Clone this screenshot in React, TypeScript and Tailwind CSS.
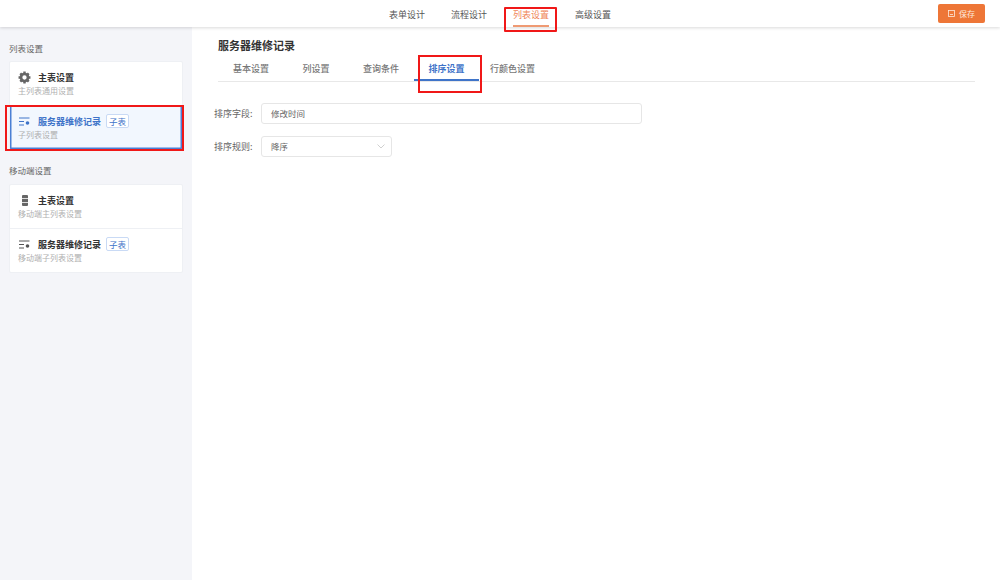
const font = { fontFamily: '"Noto Sans CJK SC", sans-serif' };

function GearIcon() {
    return (
        <svg width="13" height="13" viewBox="0 0 24 24" fill="none" stroke="#666" strokeWidth="5" strokeLinejoin="round">
            <circle cx="12" cy="12" r="6.5" />
            <path strokeWidth="4.5" d="M12 1v4M12 19v4M1 12h4M19 12h4M4.200 4.200l2.800 2.800M17 17l2.800 2.800M4.200 19.800L7 17M17 7l2.800-2.800" />
        </svg>
    );
}

function SubIcon({ color }: { color: string }) {
    return (
        <svg width="11" height="9" viewBox="0 0 11 9" fill="none" stroke={color} strokeWidth="1">
            <path d="M0 1h10.500M0 4.500h5M0 8h5" />
            <circle cx="8.500" cy="6" r="1.800" fill={color} stroke="none" />
        </svg>
    );
}

function PhoneIcon() {
    return (
        <svg width="6" height="11" viewBox="0 0 6 11">
            <rect width="6" height="11" rx="1" fill="#666" />
            <rect x="0" y="3" width="6" height="1" fill="#ddd" />
            <rect x="0" y="7" width="6" height="1" fill="#ddd" />
        </svg>
    );
}

function Badge() {
    return (
        <span className="flex h-[14px] w-[23px] items-center justify-center rounded-[2px] border border-[#c9daf5] bg-white text-[8.500px] leading-none text-[#3f74c9]">
            子表
        </span>
    );
}

type RowProps = {
    active?: boolean;
    badge?: boolean;
    icon: React.ReactNode;
    subtitle: string;
    title: string;
};

function Row({ active, badge, icon, subtitle, title }: RowProps) {
    return (
        <div
            className={`flex h-[43.500px] flex-col pt-[9px] pl-[8px] ${
                active
                    ? 'bg-[#f2f7fe] shadow-[inset_1.500px_0_0_#4a7fd4,inset_-1.500px_0_0_#4a7fd4,inset_0_-1.500px_0_0_#4a7fd4]'
                    : ''
            }`}
        >
            <div className="flex h-[13px] items-center">
                <span className="flex w-[13px] justify-center">{icon}</span>
                <span className={`ml-[7px] text-[9px] leading-none font-bold ${active ? 'text-[#3f74c9]' : 'text-[#333]'}`}>
                    {title}
                </span>
                {badge && (
                    <span className="ml-[5px]">
                        <Badge />
                    </span>
                )}
            </div>
            <span className="mt-[1px] text-[8px] leading-[11px] text-[#b0b0b0]">{subtitle}</span>
        </div>
    );
}

function NavItem({ active, label }: { active?: boolean; label: string }) {
    return (
        <div className={`flex h-[27px] items-center pt-[2px] text-[9px] ${active ? 'relative text-[#ef8558]' : 'text-[#555]'}`}>
            {label}
            {active && <span className="absolute right-0 bottom-0 left-0 h-[2px] bg-[#ef9a73]" />}
        </div>
    );
}

function Tab({ active, label, width }: { active?: boolean; label: string; width: string }) {
    return (
        <div
            className={`${width} flex h-[26px] items-center justify-center border-b-2 pt-[3px] text-[9px] ${
                active ? 'border-[#3f74c9] font-bold text-[#3f74c9]' : 'border-transparent font-medium text-[#777]'
            }`}
        >
            {label}
        </div>
    );
}

export default function App() {
    return (
        <div className="relative flex h-[580px] w-[1000px] flex-col overflow-hidden bg-white" style={font}>
            <header className="relative z-10 flex h-[27px] shrink-0 items-center justify-center bg-white shadow-[0_1px_3px_rgba(0,0,0,0.15)]">
                <div className="flex gap-[26px]">
                    <NavItem label="表单设计" />
                    <NavItem label="流程设计" />
                    <NavItem active label="列表设置" />
                    <NavItem label="高级设置" />
                </div>
                <button className="absolute top-[4px] left-[938px] flex h-[19px] w-[47px] items-center justify-center gap-[4px] rounded-[2px] bg-[#ee7637] text-[8px] text-[#fde9dd]">
                    <svg width="7" height="7" viewBox="0 0 7 7" fill="none" stroke="#fde9dd" strokeWidth="0.800">
                        <rect x="0.500" y="0.500" width="6" height="6" />
                        <path d="M2 4.500h3" />
                    </svg>
                    保存
                </button>
            </header>

            <div className="flex flex-1">
                <aside className="w-[192px] shrink-0 bg-[#f4f5f9] pt-[15px] pl-[9px]">
                    <p className="text-[8.500px] leading-[12px] text-[#666]">列表设置</p>
                    <div className="mt-[7px] w-[174px] overflow-hidden rounded-[2px] border border-[#eef0f4] bg-white">
                        <Row icon={<GearIcon />} title="主表设置" subtitle="主列表通用设置" />
                        <Row active badge icon={<SubIcon color="#3f74c9" />} title="服务器维修记录" subtitle="子列表设置" />
                    </div>

                    <p className="mt-[14px] text-[8.500px] leading-[12px] text-[#666]">移动端设置</p>
                    <div className="mt-[8px] w-[174px] divide-y divide-[#eef0f4] overflow-hidden rounded-[2px] border border-[#eef0f4] bg-white">
                        <Row icon={<PhoneIcon />} title="主表设置" subtitle="移动端主列表设置" />
                        <Row badge icon={<SubIcon color="#555" />} title="服务器维修记录" subtitle="移动端子列表设置" />
                    </div>
                </aside>

                <main className="flex-1 pt-[10px] pr-[25px] pl-[22px]">
                    <h1 className="pl-[4px] text-[11px] leading-[16px] font-bold text-[#333]">服务器维修记录</h1>
                    <div className="mt-[1px] ml-[4px] flex h-[28px] items-end border-b border-[#e8e8e8]">
                        <Tab width="w-[66px]" label="基本设置" />
                        <Tab width="w-[64px]" label="列设置" />
                        <Tab width="w-[66px]" label="查询条件" />
                        <Tab active width="w-[65px]" label="排序设置" />
                        <Tab width="w-[67px]" label="行颜色设置" />
                    </div>

                    <div className="mt-[21px] flex items-center">
                        <label className="w-[47px] text-[9px] text-[#666]">排序字段:</label>
                        <div className="flex h-[21px] w-[381px] items-center rounded-[3px] border border-[#e6e6e6] px-[9px] text-[8.500px] text-[#666]">
                            修改时间
                        </div>
                    </div>
                    <div className="mt-[12px] flex items-center">
                        <label className="w-[47px] text-[9px] text-[#666]">排序规则:</label>
                        <div className="flex h-[21px] w-[131px] items-center justify-between rounded-[3px] border border-[#e6e6e6] pr-[6px] pl-[9px] text-[8.500px] text-[#666]">
                            降序
                            <svg width="8" height="5" viewBox="0 0 8 5" fill="none" stroke="#c4c4c4" strokeWidth="0.800">
                                <path d="M0.500 0.500L4 4l3.500-3.500" />
                            </svg>
                        </div>
                    </div>
                </main>
            </div>

            <div className="absolute top-[105px] left-[5px] z-20 h-[46px] w-[179px] border-2 border-[#f01818]" />
            <div className="absolute top-[7px] left-[504px] z-20 h-[25px] w-[53px] rounded-[1px] border-2 border-[#f01818]" />
            <div className="absolute top-[55px] left-[418px] z-20 h-[38px] w-[64px] border-2 border-[#f01818]" />
        </div>
    );
}
